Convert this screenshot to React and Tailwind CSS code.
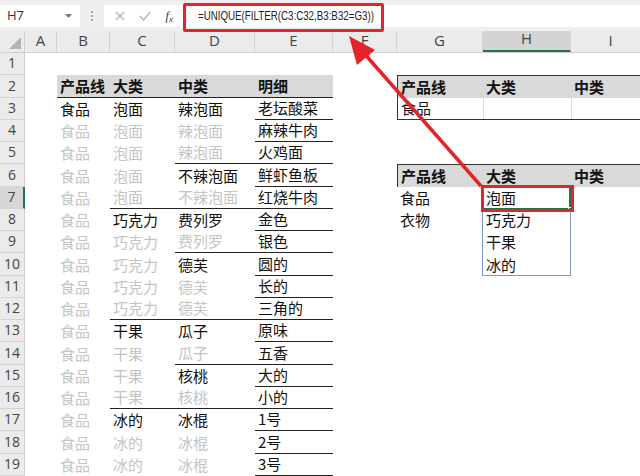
import React from 'react';

const W = ['w-[32px]', 'w-[53px]', 'w-[65px]', 'w-[80px]', 'w-[78px]', 'w-[64px]', 'w-[86px]', 'w-[88px]', 'w-[80px]'];
const LETTERS = ['A', 'B', 'C', 'D', 'E', 'F', 'G', 'H', 'I'];

const left = [
  ['食品', 1, '泡面', 1, '辣泡面', 1, '老坛酸菜', 'E'],
  ['食品', 0, '泡面', 0, '辣泡面', 0, '麻辣牛肉', 'E'],
  ['食品', 0, '泡面', 0, '辣泡面', 0, '火鸡面', 'D'],
  ['食品', 0, '泡面', 0, '不辣泡面', 1, '鲜虾鱼板', 'E'],
  ['食品', 0, '泡面', 0, '不辣泡面', 0, '红烧牛肉', 'C'],
  ['食品', 0, '巧克力', 1, '费列罗', 1, '金色', 'E'],
  ['食品', 0, '巧克力', 0, '费列罗', 0, '银色', 'D'],
  ['食品', 0, '巧克力', 0, '德芙', 1, '圆的', 'E'],
  ['食品', 0, '巧克力', 0, '德芙', 0, '长的', 'E'],
  ['食品', 0, '巧克力', 0, '德芙', 0, '三角的', 'C'],
  ['食品', 0, '干果', 1, '瓜子', 1, '原味', 'E'],
  ['食品', 0, '干果', 0, '瓜子', 0, '五香', 'D'],
  ['食品', 0, '干果', 0, '核桃', 1, '大的', 'E'],
  ['食品', 0, '干果', 0, '核桃', 0, '小的', 'C'],
  ['食品', 0, '冰的', 1, '冰棍', 1, '1号', 'E'],
  ['食品', 0, '冰的', 0, '冰棍', 0, '2号', 'E'],
  ['食品', 0, '冰的', 0, '冰棍', 0, '3号', 'E'],
];

const right = {
  7: ['食品', '泡面'],
  8: ['衣物', '巧克力'],
  9: ['', '干果'],
  10: ['', '冰的'],
};

function Cell({ i, className = '', children }) {
  return (
    <div className={`${W[i]} shrink-0 h-full flex items-end pb-[1px] pl-[3px] whitespace-nowrap overflow-visible ${className}`}>
      {children}
    </div>
  );
}

function Row({ n }) {
  const active = n === 7;
  let cells;
  if (n === 2) {
    cells = (
      <>
        <Cell i={0} />
        <Cell i={1} className="bg-[#d9d9d9] font-bold border-b border-[#222]">产品线</Cell>
        <Cell i={2} className="bg-[#d9d9d9] font-bold border-b border-[#222]">大类</Cell>
        <Cell i={3} className="bg-[#d9d9d9] font-bold border-b border-[#222]">中类</Cell>
        <Cell i={4} className="bg-[#d9d9d9] font-bold border-b border-[#222]">明细</Cell>
        <Cell i={5} />
        <Cell i={6} className="bg-[#d9d9d9] font-bold border-t border-l border-[#333]">产品线</Cell>
        <Cell i={7} className="bg-[#d9d9d9] font-bold border-t border-[#333]">大类</Cell>
        <Cell i={8} className="bg-[#d9d9d9] font-bold border-t border-[#333]">中类</Cell>
      </>
    );
  } else if (n >= 3) {
    const d = left[n - 3];
    const fromC = d[7] === 'C';
    const fromD = d[7] === 'C' || d[7] === 'D';
    let g = null;
    let h = null;
    let iCell = null;
    if (n === 3) {
      g = <Cell i={6} className="border-l border-b border-[#333]">食品</Cell>;
      h = <Cell i={7} className="border-b border-[#333] shadow-[inset_1px_0_0_#dcdcdc]" />;
      iCell = <Cell i={8} className="border-b border-[#333] shadow-[inset_1px_0_0_#dcdcdc]" />;
    } else if (n === 6) {
      g = <Cell i={6} className="bg-[#d9d9d9] font-bold border-t border-l border-[#333]">产品线</Cell>;
      h = <Cell i={7} className="bg-[#d9d9d9] font-bold border-t border-[#333]">大类</Cell>;
      iCell = <Cell i={8} className="bg-[#d9d9d9] font-bold border-t border-[#333]">中类</Cell>;
    } else if (right[n]) {
      g = <Cell i={6}>{right[n][0]}</Cell>;
      h = <Cell i={7}>{right[n][1]}</Cell>;
      iCell = <Cell i={8} />;
    } else {
      g = <Cell i={6} />;
      h = <Cell i={7} />;
      iCell = <Cell i={8} />;
    }
    cells = (
      <>
        <Cell i={0} />
        <Cell i={1} className={d[1] ? 'text-[#111]' : 'text-[#c4c4c4]'}>{d[0]}</Cell>
        <Cell i={2} className={`${d[3] ? 'text-[#111]' : 'text-[#c4c4c4]'} ${fromC ? 'border-b border-[#222]' : ''}`}>{d[2]}</Cell>
        <Cell i={3} className={`${d[5] ? 'text-[#111]' : 'text-[#c4c4c4]'} ${fromD ? 'border-b border-[#222]' : ''}`}>{d[4]}</Cell>
        <Cell i={4} className="text-[#111] border-b border-[#222]">{d[6]}</Cell>
        <Cell i={5} />
        {g}
        {h}
        {iCell}
      </>
    );
  } else {
    cells = W.map((_, i) => <Cell key={i} i={i} />);
  }
  return (
    <div className="flex h-[22.25px] text-[15px] leading-[20px] text-[#111]">
      <div
        className={`w-[25px] shrink-0 flex items-end justify-center pb-[1px] text-[14px] text-[#444] border-b border-[#d4d4d4] ${
          active ? 'bg-[#d6d6d6] border-r-2 border-r-[#217346]' : 'bg-[#ebebeb] border-r border-r-[#cfcfcf]'
        }`}
        style={{ fontFamily: '"Open Sans", sans-serif' }}
      >
        {n}
      </div>
      {cells}
    </div>
  );
}

export default function App() {
  const rows = Array.from({ length: 19 }, (_, k) => k + 1);
  return (
    <div
      className="relative w-[640px] h-[476px] overflow-hidden bg-white"
      style={{ fontFamily: '"Noto Sans CJK SC", "Noto Sans", sans-serif' }}
    >
      {/* formula bar */}
      <div className="flex items-center h-[31px] bg-[#efefef] gap-[3px] pt-[1px]" style={{ fontFamily: '"Open Sans", sans-serif' }}>
        <div className="w-[80px] h-[22px] bg-white flex items-center justify-between pl-[7px] pr-[8px] text-[13px] text-[#333]">
          <span>H7</span>
          <svg width="7" height="4" viewBox="0 0 7 4"><path d="M0 0h7L3.5 4z" fill="#777" /></svg>
        </div>
        <div className="w-[18px] flex flex-col items-center gap-[2px]">
          <span className="w-[2px] h-[2px] bg-[#aaa]" />
          <span className="w-[2px] h-[2px] bg-[#aaa]" />
          <span className="w-[2px] h-[2px] bg-[#aaa]" />
        </div>
        <div className="w-[80px] h-[22px] bg-white flex items-center justify-around px-[4px]">
          <svg width="10" height="10" viewBox="0 0 10 10"><path d="M1 1l8 8M9 1l-8 8" stroke="#b0b0b0" strokeWidth="1.2" /></svg>
          <svg width="12" height="10" viewBox="0 0 12 10"><path d="M1 5l3.5 4L11 1" stroke="#b0b0b0" strokeWidth="1.2" fill="none" /></svg>
          <span className="text-[12px] italic text-[#333]" style={{ fontFamily: '"Liberation Serif", serif' }}>
            f<sub className="text-[9px]">x</sub>
          </span>
        </div>
        <div
          className="flex-1 h-[22px] bg-white flex items-center pl-[11px] text-[12.5px] text-[#222]"
          style={{ fontFamily: '"Liberation Sans", sans-serif' }}
        >
          <span className="inline-block origin-left scale-x-[0.78] whitespace-nowrap">=UNIQUE(FILTER(C3:C32,B3:B32=G3))</span>
        </div>
      </div>

      {/* column header */}
      <div className="flex h-[22px] bg-[#ebebeb] border-b border-[#cfcfcf] text-[15px] text-[#444]" style={{ fontFamily: '"Open Sans", sans-serif' }}>
        <div className="w-[25px] shrink-0 flex items-end justify-end p-[3px] border-r border-[#d0d0d0]">
          <svg width="12" height="12" viewBox="0 0 12 12"><path d="M12 0V12H0z" fill="#b5b5b5" /></svg>
        </div>
        {LETTERS.map((l, i) => (
          <div
            key={l}
            className={`${W[i]} shrink-0 flex items-end pb-[1px] justify-center border-r border-[#d4d4d4] ${
              l === 'H' ? 'bg-[#d4d4d4] border-b-2 border-b-[#217346]' : ''
            }`}
          >
            {l}
          </div>
        ))}
      </div>

      {rows.map((n) => (
        <Row key={n} n={n} />
      ))}

      {/* spill range */}
      <div className="absolute left-[482px] top-[186px] w-[89px] h-[90px] border border-[#7d98c8]" />
      {/* active cell */}
      <div className="absolute left-[482px] top-[186px] w-[89px] h-[24px] border-r-2 border-b-2 border-[#217346]" />
      <div className="absolute left-[568px] top-[207px] w-[5px] h-[5px] bg-[#217346] border border-white" />
      {/* red highlight boxes */}
      <div className="absolute left-[183px] top-[3px] w-[201px] h-[29px] border-[3px] border-[#e3242b] rounded-[2px]" />
      <div className="absolute left-[481px] top-[185px] w-[93px] h-[27px] border-[3px] border-[#e3242b]" />
      {/* arrow */}
      <svg className="absolute left-0 top-0" width="640" height="476" viewBox="0 0 640 476">
        <line x1="481" y1="186" x2="362" y2="51" stroke="#e3242b" strokeWidth="3.5" />
        <path d="M349 36 L375 50 L357 65 Z" fill="#e3242b" />
      </svg>
    </div>
  );
}
